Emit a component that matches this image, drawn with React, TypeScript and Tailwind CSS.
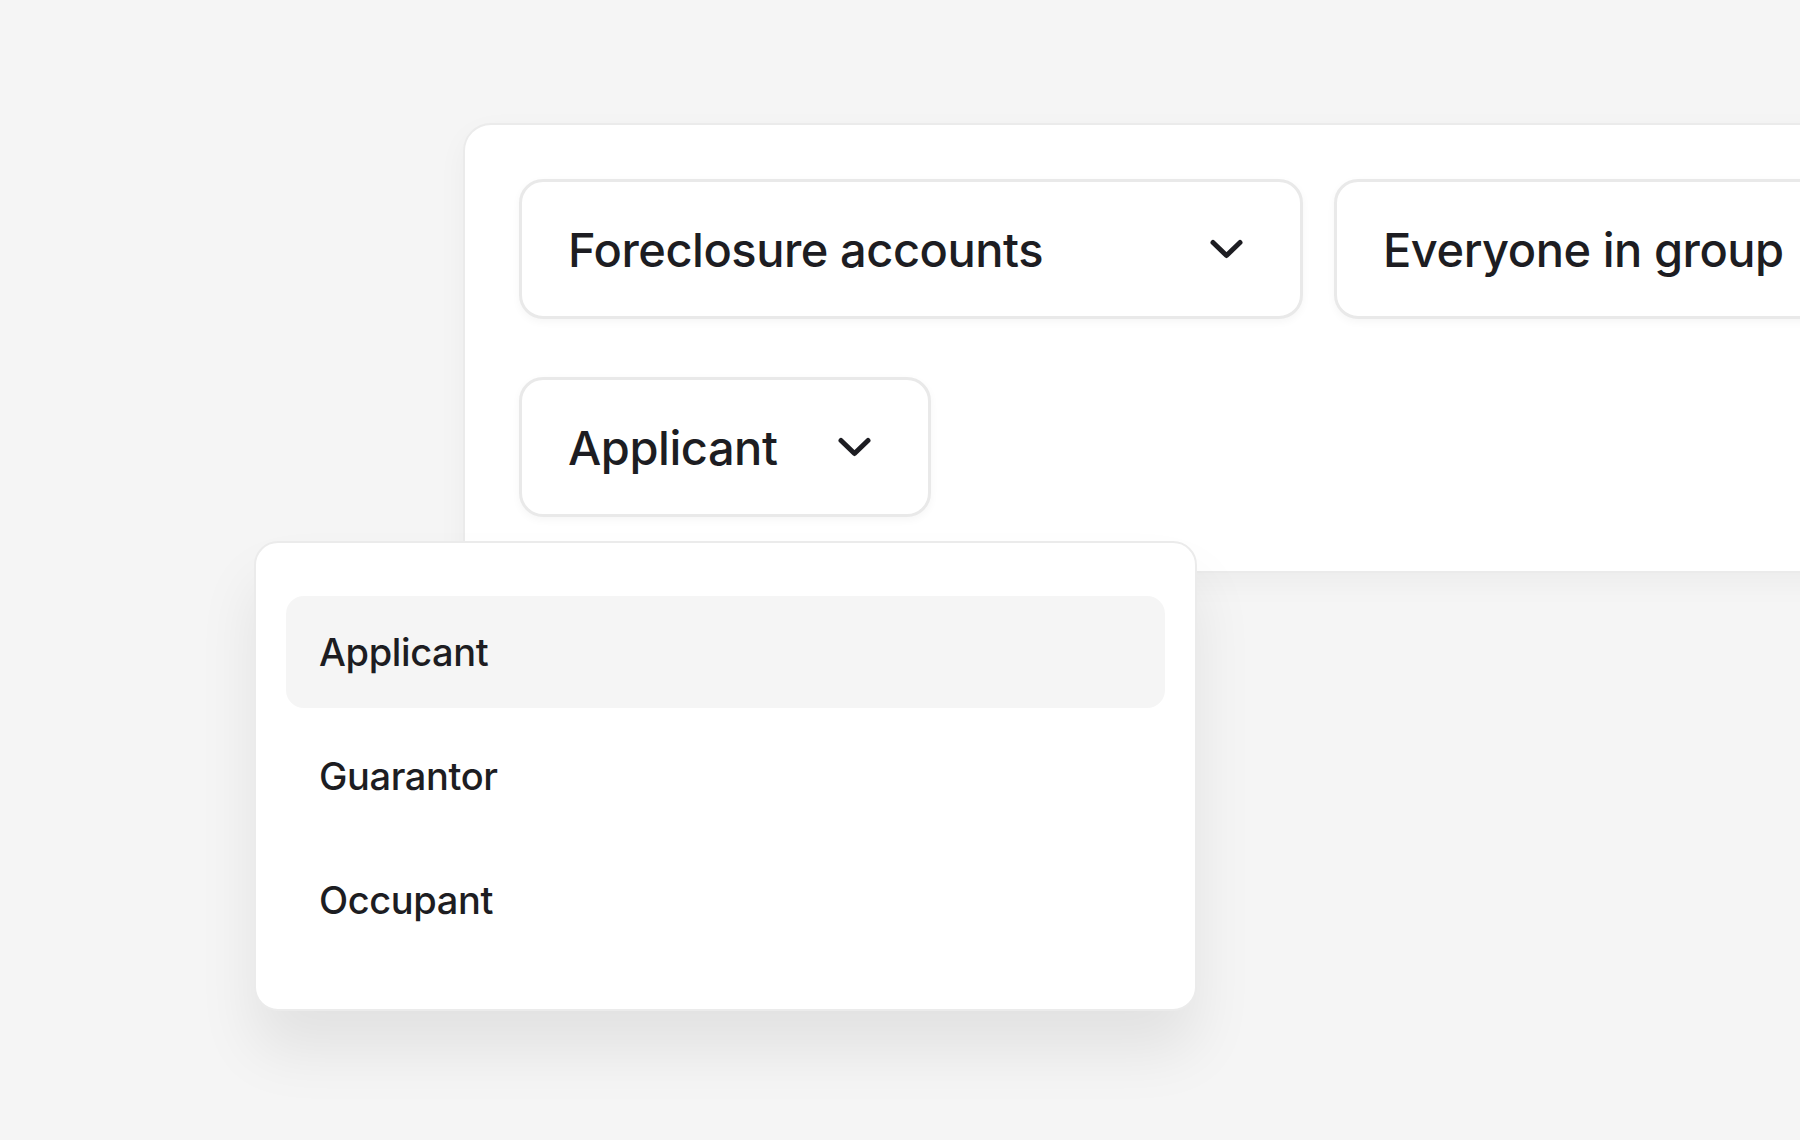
import React from 'react';

const font = { fontFamily: 'Inter, "Noto Sans", sans-serif' };

const Chevron: React.FC = () => (
  <svg width="33" height="20" viewBox="0 0 33 20" fill="none" className="shrink-0">
    <path
      d="M3 3.5 16.5 16.5 30 3.5"
      stroke="#1d1d22"
      strokeWidth="5"
      strokeLinecap="round"
      strokeLinejoin="round"
    />
  </svg>
);

const SelectBox: React.FC<{ label: string; width: string; chevron?: boolean }> = ({ label, width, chevron = true }) => (
  <div
    className={`${width} h-[140px] shrink-0 flex items-center justify-between pl-[46px] pr-[57px] bg-white rounded-[24px] border-[3px] border-[#e9e9e9] shadow-[0_3px_8px_rgba(0,0,0,0.04)]`}
  >
    <span className="text-[47px] font-[450] leading-none text-[#1d1d22] tracking-[-0.01em] whitespace-nowrap">{label}</span>
    {chevron && <Chevron />}
  </div>
);

const OPTIONS = ['Applicant', 'Guarantor', 'Occupant'];

export default function App() {
  return (
    <div className="relative w-full h-[1140px] overflow-hidden bg-[#f5f5f5]" style={font}>
      <div className="pl-[463px] pt-[123px]">
        {/* Filter panel */}
        <div className="w-[1500px] bg-white rounded-[28px] border-2 border-[#ebebeb] p-[54px] flex flex-col gap-[58px] shadow-[0_10px_30px_rgba(0,0,0,0.04)]">
          <div className="flex gap-[31px]">
            <SelectBox label="Foreclosure accounts" width="w-[784px]" />
            <SelectBox label="Everyone in group" width="w-[700px]" />
          </div>
          <div className="flex">
            <SelectBox label="Applicant" width="w-[412px]" />
          </div>
        </div>
      </div>

      {/* Open menu */}
      <div className="absolute left-[254px] top-[541px] w-[943px] bg-white rounded-[24px] border-2 border-[#ebebeb] px-[30px] py-[53px] flex flex-col gap-[12px] shadow-[0_40px_60px_rgba(0,0,0,0.08)]">
        {OPTIONS.map((opt, i) => (
          <div
            key={opt}
            className={`h-[112px] rounded-[18px] px-[33px] flex items-center ${i === 0 ? 'bg-[#f5f5f5]' : ''}`}
          >
            <span className="text-[38px] font-[450] leading-none text-[#1d1d22] tracking-[-0.01em]">{opt}</span>
          </div>
        ))}
      </div>
    </div>
  );
}
